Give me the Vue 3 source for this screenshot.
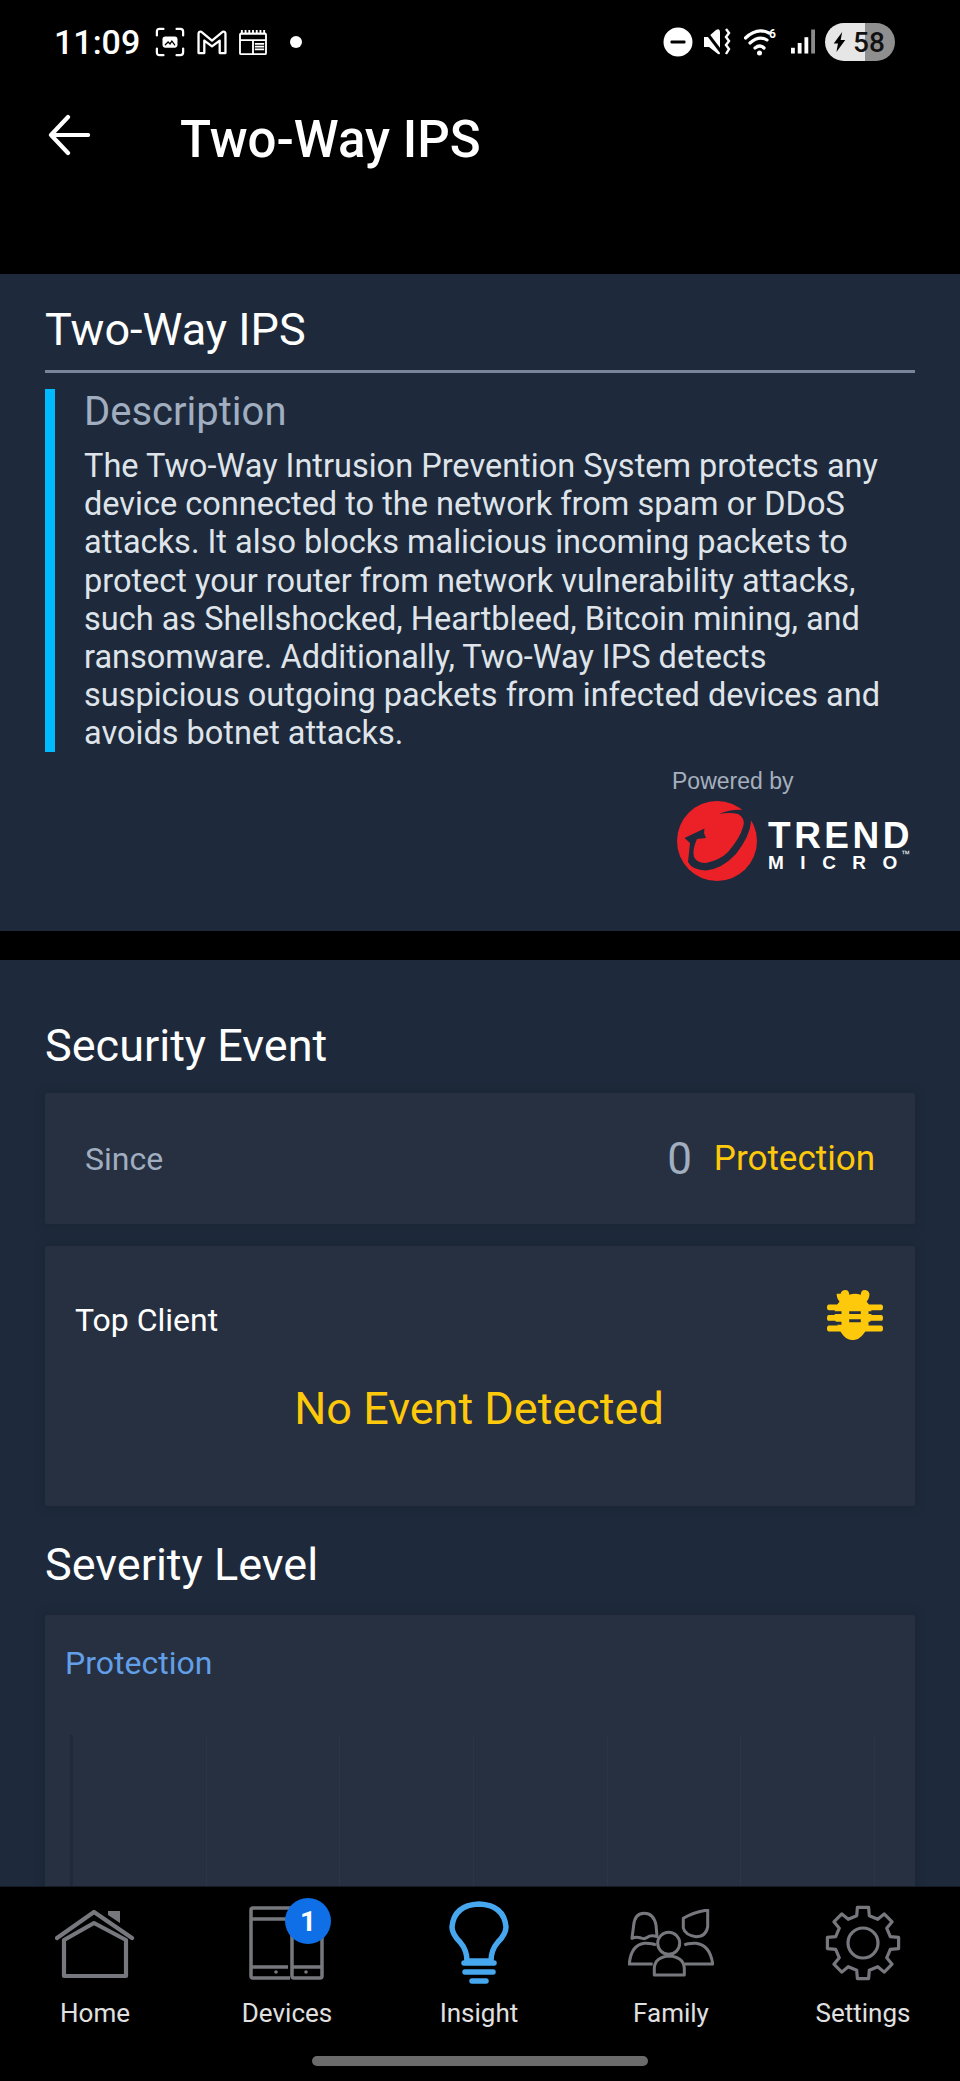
<template>
  <div class="phone">
    <div class="status-bar">
      <div class="status-left">
        <span class="clock">11:09</span>
        <svg class="st-icon" width="30" height="30" viewBox="0 0 32 32" fill="none" stroke="#fff" stroke-width="2.4" stroke-linecap="round">
          <path d="M2 9V5q0-3 3-3h4M23 2h4q3 0 3 3v4M30 23v4q0 3-3 3h-4M9 30H5q-3 0-3-3v-4" />
          <rect x="8" y="10" width="16" height="12" rx="3" fill="#fff" stroke="none" />
          <path d="M11 19l3-3 2 2 2-3 3 4" stroke="#000" stroke-width="1.4" />
        </svg>
        <svg class="st-icon" width="32" height="25" viewBox="0 0 32 26" fill="none" stroke="#fff" stroke-width="2.4" stroke-linejoin="round">
          <path d="M2 24V4q0-3 3-2l11 9 11-9q3-1 3 2v20h-6V11l-8 6-8-6v13z" />
        </svg>
        <svg class="st-icon" width="28" height="26" viewBox="0 0 30 28" fill="none" stroke="#fff" stroke-width="2">
          <path d="M1 5h28M3 1v4M7 1v4M11 1v4M15 1v4M19 1v4M23 1v4M27 1v4" />
          <rect x="1" y="5" width="28" height="22" rx="1" />
          <path d="M1 12h28M15 12v15M17 16h10M17 19h10M17 22h10" />
        </svg>
        <span class="dot"></span>
      </div>
      <div class="status-right">
        <svg class="s-dnd" width="30" height="30" viewBox="0 0 30 30"><circle cx="15" cy="15" r="14.500" fill="#fff" /><rect x="7.500" y="13.500" width="15" height="3" rx="1" fill="#000" /></svg>
        <svg class="s-mute" width="28" height="28" viewBox="0 0 28 28" fill="#fff">
          <path d="M1 9h4L13 2q4-2 4 2v21q0 2-2 1L6 19H1z" />
          <path d="M0 0l19 25" stroke="#000" stroke-width="3" />
          <path d="M23 1l3 4-3 4 3 4-3 4 3 4-3 5" stroke="#fff" stroke-width="2.400" fill="none" />
        </svg>
        <svg class="s-wifi" width="34" height="30" viewBox="0 0 34 30" fill="none" stroke="#fff" stroke-width="3.200" stroke-linecap="round">
          <path d="M1.500 11Q13 0 25 6M6 16q9-8 17-3M11 21q5-4 9 0" />
          <circle cx="15.500" cy="26" r="2.500" fill="#fff" stroke="none" />
          <text x="25" y="11" class="wifi-six">6</text>
        </svg>
        <svg class="s-signal" width="24" height="26" viewBox="0 0 25 26">
          <rect x="0" y="19" width="4" height="6" fill="#fff" />
          <rect x="7" y="14" width="4" height="11" fill="#fff" />
          <rect x="14" y="8" width="4" height="17" fill="#fff" />
          <rect x="21" y="0" width="4" height="25" fill="#8a8a8a" />
        </svg>
        <div class="battery">
          <svg width="13" height="20" viewBox="0 0 15 26"><path d="M11 0L0 15h5.500l-2 11L15 10.500H9z" fill="#000" /></svg>
          <span>58</span>
        </div>
      </div>
    </div>

    <div class="app-bar">
      <svg class="back" width="42" height="42" viewBox="0 0 42 42" fill="none" stroke="#fff" stroke-width="4.200" stroke-linecap="round" stroke-linejoin="round">
        <path d="M40 21H3M20 3L3 21l17 18" />
      </svg>
      <h1>Two-Way IPS</h1>
    </div>

    <main class="content">
      <section class="intro">
        <h2>Two-Way IPS</h2>
        <div class="desc">
          <h3>Description</h3>
          <p>The Two-Way Intrusion Prevention System protects any device connected to the network from spam or DDoS attacks. It also blocks malicious incoming packets to protect your router from network vulnerability attacks, such as Shellshocked, Heartbleed, Bitcoin mining, and ransomware. Additionally, Two-Way IPS detects suspicious outgoing packets from infected devices and avoids botnet attacks.</p>
        </div>
        <div class="powered">
          <span class="powered-by">Powered by</span>
          <div class="trend">
            <svg width="82" height="82" viewBox="0 0 82 82">
              <circle cx="41" cy="41" r="40" fill="#ec2127" />
              <path d="M43 14Q56 9 66 10 76 12 75 22 74 36 60 54 46 69 30 70.500 16 70 12 62L14 43 8.500 38 28.500 28.500 28 33 30 38 21 39Q16 50 18 57 21 63 30 63 44 60 52 52 64 38 67 27 70 18 62 14 54 12 43 14z" fill="#1e2a3b" />
            </svg>
            <div class="trend-text">
              <span class="trend-top">TREND</span>
              <span class="trend-bottom">MICRO<sup>™</sup></span>
            </div>
          </div>
        </div>
      </section>

      <section class="events">
        <h2 class="plain">Security Event</h2>
        <div class="card since">
          <span class="since-label">Since</span>
          <span class="since-val"><b>0</b><em>Protection</em></span>
        </div>
        <div class="card top-client">
          <div class="tc-head">
            <span>Top Client</span>
            <svg width="56" height="54" viewBox="0 0 58 54" fill="#ffc90b">
              <path d="M14 5q1-4 5-4t4 5q6-2 12 0 0-5 4-5t5 4q0 5-3 8 5 6 5 10v4q0 6-3 11-7 15-15 15h-2q-9 0-15-15-3-5-3-11v-4q0-4 5-10-3-3-3-8z" />
              <path d="M2 16h54q2 0 2 3t-2 3H2q-2 0-2-3t2-3zM2 27h54q2 0 2 3t-2 3H2q-2 0-2-3t2-3zM2 38h54q2 0 2 3t-2 3H2q-2 0-2-3t2-3z" />
              <path d="M0 24.500h15M43 24.500h15M0 35.500h15M43 35.500h15M23 24.500h12M23 33h12" stroke="#263040" stroke-width="3" />
            </svg>
          </div>
          <div class="no-event">No Event Detected</div>
        </div>
        <h2 class="plain sev">Severity Level</h2>
        <div class="card chart">
          <div class="chart-title">Protection</div>
          <div class="chart-area">
            <i v-for="n in 6" :key="n"></i>
          </div>
        </div>
      </section>
    </main>

    <nav class="tabbar">
      <div class="tabs">
        <div v-for="t in tabs" :key="t.name" class="tab">
          <div class="tab-icon">
            <svg v-if="t.name === 'Home'" width="80" height="72" viewBox="0 0 80 72" fill="none" stroke="#77787e" stroke-width="4.200" stroke-linejoin="round" stroke-linecap="round">
              <path d="M2 31L39 5l38 26" />
              <path d="M9 33v36h62V33L39 16z" />
              <path d="M53 4h12v12L53 8z" fill="#77787e" stroke="none" />
            </svg>
            <svg v-else-if="t.name === 'Devices'" width="76" height="74" viewBox="0 0 76 74" fill="none" stroke="#77787e" stroke-width="3.500" stroke-linejoin="round">
              <path d="M41 72H4q-2 0-2-2V4q0-2 2-2h52q2 0 2 2v14M2 13h46M2 61h37" />
              <path d="M43 70V28q0-2 2-2h26q2 0 2 2v42q0 2-2 2H45q-2 0-2-2zM43 61h30" />
              <circle cx="27" cy="66" r="1.800" fill="#77787e" stroke="none" />
              <circle cx="57" cy="66" r="1.800" fill="#77787e" stroke="none" />
            </svg>
            <svg v-else-if="t.name === 'Insight'" width="60" height="84" viewBox="0 0 60 84" fill="none" stroke="#46a6ee" stroke-width="5.500" stroke-linecap="round">
              <path d="M18 60q0-11-7-19Q3 33 3 26 5 4 30 3q25 1 27 23 0 7-8 15-7 8-7 19z" stroke-linejoin="round" />
              <path d="M15 62h30M16 71h28M23 80h14" />
            </svg>
            <svg v-else-if="t.name === 'Family'" width="86" height="69" viewBox="0 0 86 69" fill="none" stroke="#77787e" stroke-width="3" stroke-linejoin="round">
              <path d="M4 29.300L5.700 16Q7 4.300 16.300 4.300T28 16L29 27.700Q23 25.500 19 28.500 16.300 30.500 13 29 8 27.500 4 29.300z" />
              <path d="M55.300 9.300Q66 3 79.700 1V17.700Q78 27.700 68 27.700 57 26 55.300 19z" />
              <circle cx="40.700" cy="34.300" r="11" />
              <path d="M26.300 66V59Q27 48 41.300 47 55.500 48 56.300 59v7z" />
              <path d="M28 36Q24 34 16.300 34.300 3 36 1.300 55H24.700" />
              <path d="M56.300 36Q60 34 68 34.300 82 36 84.700 55H56.300" />
            </svg>
            <svg v-else width="76" height="76" viewBox="0 0 76 76" fill="none" stroke="#77787e" stroke-width="3.200" stroke-linejoin="round">
              <path :d="gearPath" />
              <circle cx="38" cy="38" r="15" />
            </svg>
            <span v-if="t.badge" class="badge">{{ t.badge }}</span>
          </div>
          <span class="tab-label">{{ t.name }}</span>
        </div>
      </div>
      <div class="home-pill"></div>
    </nav>
  </div>
</template>

<script setup>
const tabs = [
  { name: 'Home' },
  { name: 'Devices', badge: 1 },
  { name: 'Insight' },
  { name: 'Family' },
  { name: 'Settings' }
]

// 8 teeth round the centre of a 76 box
const gearPoint = (r, deg) => {
  const a = (deg * Math.PI) / 180
  return `${(38 + r * Math.cos(a)).toFixed(1)} ${(38 + r * Math.sin(a)).toFixed(1)}`
}

const gearPath = 'M' + Array.from({ length: 8 }, (_, i) => {
  const a = i * 45 - 90
  return [
    gearPoint(28, a - 13),
    gearPoint(36, a - 9),
    gearPoint(36, a + 9),
    gearPoint(28, a + 13)
  ].join(' L')
}).join(' L') + 'z'
</script>

<style>
html, body {
  margin: 0;
  background: #000;
}
</style>

<style scoped>
* {
  box-sizing: border-box;
}

.phone {
  width: 960px;
  height: 2081px;
  display: flex;
  flex-direction: column;
  overflow: hidden;
  background: #000;
  font-family: Roboto, "Liberation Sans", sans-serif;
  color: #fff;
}

.status-bar {
  height: 84px;
  flex-shrink: 0;
  display: flex;
  justify-content: space-between;
  align-items: center;
  padding: 0 65px 0 54px;
}

.status-left,
.status-right {
  display: flex;
  align-items: center;
}

.status-left {
  gap: 11px;
}

.clock {
  width: 90px;
  font-size: 34px;
  font-weight: 500;
}

.dot {
  width: 12px;
  height: 12px;
  border-radius: 50%;
  background: #fff;
  margin-left: 12px;
}

.s-mute {
  margin-left: 10px;
}

.s-wifi {
  margin-left: 13px;
}

.s-signal {
  margin-left: 13px;
}

.wifi-six {
  font-size: 12px;
  font-weight: 700;
  fill: #fff;
  stroke: none;
  font-family: Roboto, sans-serif;
}

.battery {
  margin-left: 10px;
  width: 70px;
  height: 38px;
  border-radius: 19px;
  display: flex;
  align-items: center;
  gap: 7px;
  padding-left: 8px;
  background: linear-gradient(90deg, #e6e6e6 0 57%, #8f8f8f 57%);
  color: #111;
  font-size: 28px;
  font-weight: 500;
}

.app-bar {
  height: 190px;
  flex-shrink: 0;
  display: flex;
  align-items: flex-start;
  padding: 26px 0 0 48px;
}

.back {
  margin-top: 4px;
  flex-shrink: 0;
}

.app-bar h1 {
  margin: 3px 0 0 90px;
  font-size: 51px;
  line-height: 54px;
  font-weight: 500;
}

.content {
  flex: 1;
  min-height: 0;
  overflow: hidden;
  display: flex;
  flex-direction: column;
  gap: 29px;
}

.intro {
  height: 657px;
  flex-shrink: 0;
  background: #1e2a3b;
  padding: 32px 45px 0;
}

h2 {
  margin: 0;
  font-size: 45px;
  line-height: 47px;
  font-weight: 400;
  color: #fff;
}

.intro h2 {
  padding-bottom: 17px;
  border-bottom: 3px solid #77849a;
}

.desc {
  margin-top: 16px;
  border-left: 10px solid #00b9ff;
  padding-left: 29px;
  height: 363px;
}

.desc h3 {
  margin: 0 0 12px;
  font-size: 40px;
  line-height: 46px;
  font-weight: 400;
  color: #a0aec0;
}

.desc p {
  margin: 0;
  padding-right: 12px;
  font-size: 32.500px;
  line-height: 38.200px;
  color: #dfe4ea;
}

.powered {
  margin-top: 16px;
  display: flex;
  flex-direction: column;
  align-items: flex-end;
}

.powered-by {
  width: 243px;
  font-family: "Liberation Sans", sans-serif;
  font-size: 23px;
  line-height: 26px;
  color: #a6afbd;
}

.trend {
  display: flex;
  align-items: center;
  gap: 10px;
  margin-top: 6px;
  margin-right: 2px;
}

.trend-text {
  display: flex;
  flex-direction: column;
  margin-top: 13px;
  font-family: "Liberation Sans", sans-serif;
  font-weight: 700;
  color: #fff;
}

.trend-top {
  font-size: 37px;
  line-height: 31px;
  letter-spacing: 3.500px;
}

.trend-bottom {
  font-size: 19px;
  line-height: 24px;
  letter-spacing: 16.500px;
  white-space: nowrap;
}

.trend-bottom sup {
  font-size: 9px;
  letter-spacing: 0;
  margin-left: -13px;
  vertical-align: 12px;
  line-height: 0;
  font-weight: 400;
}

.events {
  flex: 1;
  background: #1e2a3b;
  padding: 61px 45px 0;
}

.plain {
  font-size: 45px;
  line-height: 50px;
}

.sev {
  margin-top: 34px;
}

.card {
  background: #263040;
  border-radius: 2px;
  box-shadow: 0 0 10px rgba(20, 28, 40, 0.5);
}

.since {
  margin-top: 22px;
  height: 131px;
  display: flex;
  justify-content: space-between;
  align-items: center;
  padding: 0 40px;
}

.since-label {
  font-size: 32px;
  color: #a0aec0;
}

.since-val {
  display: flex;
  align-items: center;
  gap: 22px;
}

.since-val b {
  font-size: 44px;
  font-weight: 400;
  color: #a0aec0;
}

.since-val em {
  font-style: normal;
  font-size: 35px;
  color: #ffc90b;
}

.top-client {
  margin-top: 22px;
  height: 260px;
  padding: 42px 32px 0 30px;
}

.tc-head {
  display: flex;
  justify-content: space-between;
  align-items: flex-start;
  font-size: 32px;
  line-height: 38px;
}

.tc-head span {
  margin-top: 13px;
}

.no-event {
  margin-top: 42px;
  text-align: center;
  font-size: 45px;
  line-height: 50px;
  color: #ffc90b;
}

.chart {
  margin-top: 25px;
  height: 300px;
  padding: 27px 20px 0;
}

.chart-title {
  font-size: 32px;
  line-height: 42px;
  color: #639fe8;
}

.chart-area {
  margin-top: 51px;
  height: 200px;
  margin-left: 5px;
  width: 805px;
  display: flex;
  border-left: 3px solid #1e2a3b;
}

.chart-area i {
  flex: 1;
  border-right: 1px solid #2a3546;
}

.tabbar {
  height: 195px;
  flex-shrink: 0;
  background: #000;
  border-top: 1px solid #161c26;
  position: relative;
  z-index: 1;
}

.tabs {
  display: grid;
  grid-template-columns: repeat(5, 192px);
  margin-left: -1px;
}

.tab {
  display: flex;
  flex-direction: column;
  align-items: center;
}

.tab-icon {
  height: 100px;
  display: flex;
  align-items: center;
  justify-content: center;
  position: relative;
  padding-top: 12px;
}

.tab-label {
  margin-top: 10px;
  font-size: 26px;
  line-height: 32px;
  color: #e0e0e0;
}

.badge {
  position: absolute;
  top: 11px;
  right: -6px;
  width: 46px;
  height: 46px;
  border-radius: 50%;
  background: #0f6fe6;
  color: #fff;
  font-size: 28px;
  font-weight: 700;
  display: flex;
  align-items: center;
  justify-content: center;
}

.home-pill {
  width: 336px;
  height: 10px;
  border-radius: 5px;
  background: #6b6b6b;
  margin: 27px auto 0;
}
</style>
